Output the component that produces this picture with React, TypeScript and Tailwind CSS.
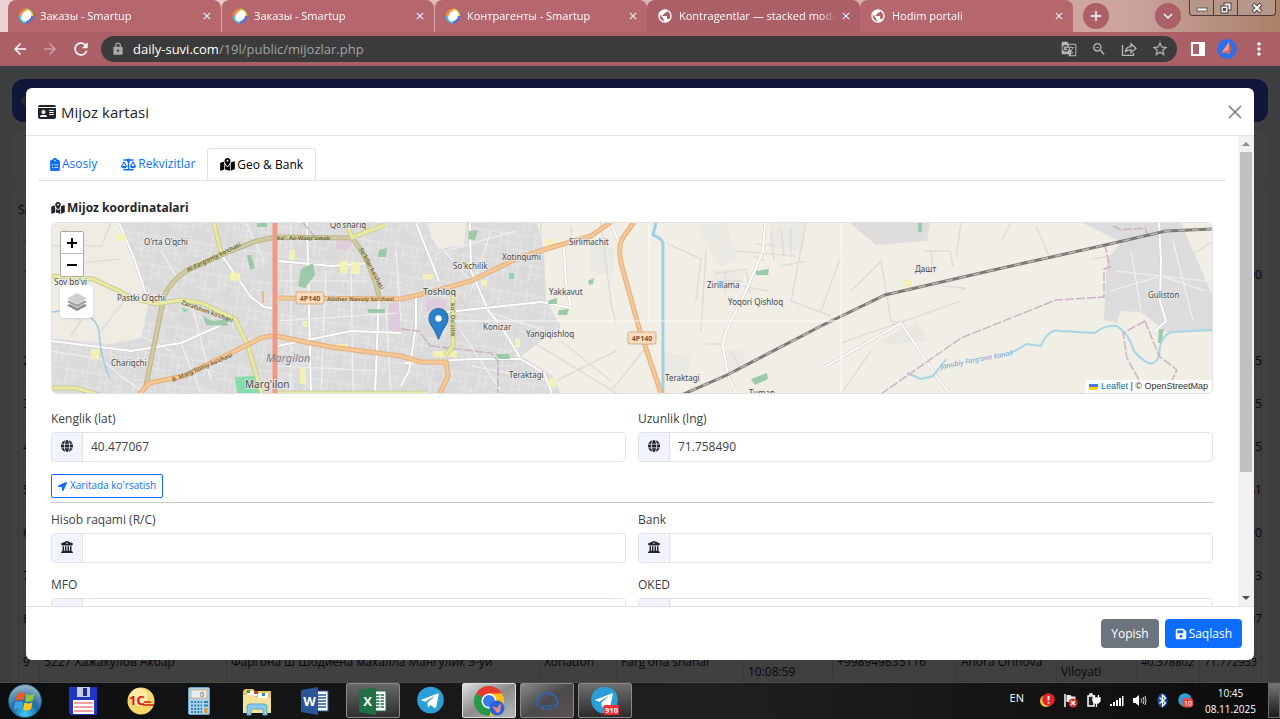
import React, { useState } from 'react';
import { FaLocationArrow } from 'react-icons/fa';
import {
  FaArrowLeft,
  FaBuildingColumns,
  FaClipboardList,
  FaFloppyDisk,
  FaGlobe,
  FaIdCard,
  FaMapLocationDot,
  FaScaleBalanced,
} from 'react-icons/fa6';
import {
  MdArrowBack,
  MdArrowForward,
  MdClose,
  MdGTranslate,
  MdLock,
  MdMoreVert,
  MdPublic,
  MdRefresh,
  MdStarOutline,
  MdZoomOut,
  MdAdd,
  MdKeyboardArrowDown,
} from 'react-icons/md';

const browserTabs = [
  { title: 'Заказы - Smartup', kind: 'smartup', active: false },
  { title: 'Заказы - Smartup', kind: 'smartup', active: false },
  { title: 'Контрагенты - Smartup', kind: 'smartup', active: false },
  { title: 'Kontragentlar — stacked modal', kind: 'globe', active: true },
  { title: 'Hodim portali', kind: 'globe', active: false },
];

const SmartupIcon = () => (
  <svg viewBox="0 0 16 16" className="h-4 w-4 shrink-0">
    <path d="M8 .6A7.4 7.4 0 0 0 .6 8L4 8a4 4 0 0 1 4-4Z" fill="#f08a3c" />
    <path d="M8 .6A7.4 7.4 0 0 1 15.4 8H12A4 4 0 0 0 8 4Z" fill="#c3d94e" />
    <path d="M15.4 8A7.4 7.4 0 0 1 8 15.4V12a4 4 0 0 0 4-4Z" fill="#5b6fd0" />
    <path d="M.6 8A7.4 7.4 0 0 0 8 15.4V12a4 4 0 0 1-4-4Z" fill="#45c0e8" />
    <ellipse cx="8.2" cy="7.8" rx="4.6" ry="6" fill="#fff" transform="rotate(38 8 8)" />
  </svg>
);

const TabStrip = () => (
  <div className="flex h-8 shrink-0 items-stretch bg-linear-to-r from-[#ecd3d6] via-[#cda39f] via-88% to-[#a98268] pl-2">
    {browserTabs.map((tab, i) => (
      <div
        key={i}
        className={`flex w-[213px] min-w-0 shrink items-center rounded-t-lg pr-2 pl-2.5 text-white ${
          tab.active ? 'bg-[#ab5f66]' : 'bg-[#b5676d]'
        } ${i === 1 || i === 2 ? 'border-l border-[#d9a5a9]' : ''}`}
      >
        {tab.kind === 'smartup' ? <SmartupIcon /> : <MdPublic className="h-4 w-4 shrink-0" />}
        <span className="ml-1.5 min-w-0 flex-1 overflow-hidden mask-r-from-90% text-[11px] leading-4 whitespace-nowrap">{tab.title}</span>
        <button type="button" aria-label="Close tab" className="ml-1 shrink-0">
          <MdClose className="h-3 w-3" />
        </button>
      </div>
    ))}
    <button type="button" aria-label="New tab" className="mt-[3px] ml-2.5 flex h-[26px] w-[26px] shrink-0 items-center justify-center rounded-full bg-[#ab5f66] text-white">
      <MdAdd className="h-[18px] w-[18px]" />
    </button>
    <div className="flex-1" />
    <button type="button" aria-label="Search tabs" className="mt-[3px] mr-2 flex h-[26px] w-[26px] shrink-0 items-center justify-center rounded-full bg-[#ab5f66] text-white">
      <MdKeyboardArrowDown className="h-[18px] w-[18px]" />
    </button>
    <div className="mr-1 flex h-4 w-[87px] shrink-0 divide-x divide-[#4d3a38] rounded-b border border-t-0 border-[#4d3a38] bg-[#b7978a]">
      <button type="button" aria-label="Minimize" className="flex w-6 items-center justify-center">
        <svg viewBox="0 0 12 10" className="h-2.5 w-3"><rect x="1" y="5" width="10" height="3" fill="#fff" stroke="#4d4644" strokeWidth=".8" /></svg>
      </button>
      <button type="button" aria-label="Restore" className="flex w-6 items-center justify-center">
        <svg viewBox="0 0 12 12" className="h-3 w-3" fill="none" stroke="#4d4644">
          <rect x="4" y="1" width="7" height="7" fill="#eee" />
          <rect x="1" y="4" width="7" height="7" fill="#eee" />
          <rect x="3.500" y="6.500" width="2" height="2" fill="#7c625a" />
        </svg>
      </button>
      <button type="button" aria-label="Close window" className="flex flex-1 items-center justify-center">
        <svg viewBox="0 0 12 12" className="h-3 w-3">
          <path d="m2 2 8 8M10 2l-8 8" stroke="#4d4644" strokeWidth="4" />
          <path d="m2.500 2.500 7 7M9.500 2.500l-7 7" stroke="#fff" strokeWidth="2" />
        </svg>
      </button>
    </div>
  </div>
);

const Toolbar = () => (
  <div className="flex h-[34px] shrink-0 items-center bg-[#ab5f66] px-[11px] text-white">
    <button type="button" aria-label="Back"><MdArrowBack className="h-[18px] w-[18px]" /></button>
    <button type="button" aria-label="Forward" className="ml-3 text-[#d19fa3]"><MdArrowForward className="h-[18px] w-[18px]" /></button>
    <button type="button" aria-label="Reload" className="ml-3"><MdRefresh className="h-5 w-5" /></button>
    <div className="ml-2.5 flex h-[26px] min-w-0 flex-1 items-center rounded-full bg-[#3b3b3b] pr-2 pl-2.5">
      <MdLock className="h-3.5 w-3.5 text-[#a8abae]" />
      <p className="ml-2 flex-1 text-[13px] leading-5 text-[#a0a3a6]">
        <span className="text-white">daily-suvi.com</span>/19l/public/mijozlar.php
      </p>
      <div className="flex items-center gap-3.5 text-[#b4b6b8]">
        <MdGTranslate className="h-4 w-4" />
        <MdZoomOut className="h-4 w-4" />
        <svg viewBox="0 0 16 16" className="h-4 w-4" fill="none" stroke="currentColor" strokeWidth="1.300">
          <path d="M1.500 4v10.300h11V12" />
          <path d="M4.500 10.500q.5-4.500 5.500-4.800V2.800l5 4.500-5 4.300V8.800q-3.500-.2-5.500 1.700Z" />
        </svg>
        <MdStarOutline className="h-[18px] w-[18px]" />
      </div>
    </div>
    <svg viewBox="0 0 14 14" className="ml-3.5 h-3.5 w-3.5">
      <path d="M0 0h14v14H0zM2 2v10h6V2z" fill="#fff" fillRule="evenodd" />
    </svg>
    <svg viewBox="0 0 20 20" className="ml-3 h-5 w-5">
      <circle cx="10" cy="10" r="10" fill="#2f6fe8" />
      <path d="m12 3 .5 8-8 2.500z" fill="#f59a86" />
      <path d="m12 3 4 10-3.500-2z" fill="#d94c4c" />
      <path d="m4.500 13.500 8-2.500 1 4z" fill="#e5645c" />
    </svg>
    <button type="button" aria-label="Menu" className="ml-3"><MdMoreVert className="h-5 w-5" /></button>
  </div>
);

const clients = [
  { id: 1, lng: '71.758490' },
  { id: null, lng: '' },
  { id: 2, lng: '71.771235' },
  { id: 3, lng: '71.780415' },
  { id: 4, lng: '71.764825' },
  { id: 5, lng: '71.753041' },
  { id: 6, lng: '71.790120' },
  { id: 7, lng: '71.786213' },
  { id: 8, lng: '71.769507' },
];

const ClientsPage = () => (
  <div aria-hidden="true" className="h-full overflow-hidden bg-[#f4f6fa] px-3 pt-[13px] text-xs text-[#212529]">
    <div className="flex h-[43px] items-center rounded-xl bg-[#4059e8] px-2 text-[#a8a8b0]">
      <FaArrowLeft className="h-4 w-4" />
    </div>
    <div className="mt-2 h-[50px] rounded-lg bg-white" />
    <div className="mt-2.5 rounded-lg bg-white px-1.5 pt-3">
      <p className="h-[26px] leading-4">Sahifada</p>
      <table className="w-full table-fixed border-collapse [&_td]:border [&_td]:border-[#dee2f4] [&_td]:px-1 [&_th]:border [&_th]:border-[#dee2f4] [&_th]:px-1">
        <colgroup>
          <col className="w-[21px]" />
          <col className="w-[187px]" />
          <col />
          <col className="w-[77px]" />
          <col className="w-[127px]" />
          <col className="w-[89px]" />
          <col className="w-[124px]" />
          <col className="w-[100px]" />
          <col className="w-[80px]" />
          <col className="w-[63px]" />
          <col className="w-[62px]" />
        </colgroup>
        <thead>
          <tr className="h-[25px]">
            <th>#</th>
            <th colSpan={10} />
          </tr>
        </thead>
        <tbody>
          {clients.map((client, i) => (
            <tr key={i} className="h-[43px]">
              <td>{client.id}</td>
              <td colSpan={9} />
              <td className="text-right">{client.lng}</td>
            </tr>
          ))}
          <tr className="h-[43px] leading-5 whitespace-nowrap">
            <td>9</td>
            <td>5227 Хажакулов Акбар</td>
            <td>Фаргона ш Шодиёна махалла Мангулик 3-уй</td>
            <td>Xonadon</td>
            <td>Farg'ona shahar</td>
            <td>2025-11-08<br />10:08:59</td>
            <td>+998949835116</td>
            <td>Ahora Orinova</td>
            <td>Farg'ona<br />Viloyati</td>
            <td className="text-[11px]">40.378802</td>
            <td className="text-[11px]">71.772933</td>
          </tr>
        </tbody>
      </table>
    </div>
  </div>
);

// label: x, y, text, size
const places: [number, number, string, number][] = [
  [143, 244, "O'rta O'qchi", 8],
  [329, 227, "Qo'shariq", 8],
  [53, 284, "Soy bo'yi", 8],
  [116, 300, "Pastki O'qchi", 8],
  [110, 365, 'Chariqchi', 8],
  [244, 387, "Marg'ilon", 10],
  [422, 294, 'Toshloq', 9],
  [452, 268, "So'kchilik", 8],
  [501, 259, 'Xotinqumi', 8],
  [568, 244, 'Sirlimachit', 8],
  [548, 294, 'Yakkavut', 8],
  [482, 329, 'Konizar', 8],
  [525, 336, 'Yangiqishloq', 8],
  [508, 377, 'Teraktagi', 8],
  [664, 380, 'Teraktagi', 8],
  [706, 287, 'Zirillama', 8],
  [727, 304, 'Yoqori Qishloq', 8],
  [748, 395, 'Tuman', 8],
  [914, 271, 'Дашт', 8],
  [1147, 297, 'Guliston', 8],
];

const yellowRoads = [
  'M51 275 92 278 120 291 130 297 155 303 180 299 200 302 234 318 247 345 261 393',
  'M213 222 220 252',
  'M345 222 352 238M352 236 384 224',
  'M51 387 75 387 98 394',
  'M452 290v55l-8 10M277 392h150',
];

const oliveRoads = ['M145 384 155 335 163 295Q170 280 185 270L225 252 255 240 275 236 352 237', 'M352 238Q371 262 378 296'];

const orangeRoads = [
  'M136 396 148 382 183 375 230 352 260 337 Q272 333 285 337 L330 346 400 355 420 361 445 361 447 375 438 394',
  'M277 297 400 298 430 291 470 280 515 258 545 248 590 235 610 221',
  'M633 221 621 238 Q617 246 620 262 L638 327 661 395',
];

const whiteRoads = [
  'M118 222 133 257 148 302M218 250 235 275 250 296 263 306 275 308M51 340 130 350 180 342 234 318',
  'M415 222 438 280M469 222 470 270 487 309 500 325 520 358 543 372 551 393M563 246 565 282 570 307',
  'M438 312 540 301 570 307M415 295 415 325 408 370 400 385M404 362 470 358 520 358',
  'M278 260 330 265 370 262M378 296 374 392M277 345 350 330 400 332M306 222 310 392M610 222 618 242',
  'M764 222 762 250 745 290 725 330 722 345 727 375 736 394M820 368 860 345 900 322 935 375 950 394',
  'M1158 222 1160 260 1159 300 1165 320 1152 332',
];

const thinRoads = [
  'M51 350 100 358 120 375 145 393M180 342 200 393M245 222 263 260M395 250 400 320M160 250 175 275M190 300 210 380',
  'M290 222v170M325 270 320 392M350 260 352 392M277 280h90M277 320l120-8M277 365l100 5M385 310 390 392M430 235l40 45M490 230l-20 60M445 250l70-20',
  'M460 330 500 390M470 365l80 15M485 310l60 20M130 330l40 20M1130 250l10 60M1110 290l50-15 45 15M1172 240l20 80M1115 270l90 10',
];

const minorRoads = [
  'M51 245 100 245 110 222M80 262 120 258M60 300 80 320 70 335M100 330 130 290M62 228 85 240',
  'M540 222v48M570 225v18M600 222l10 80 5 20M615 350l-60 30-40-25M560 340l50 40M530 340l90 55M650 340l-40 50',
  'M665 242 700 258 695 300M805 222 790 300 830 315M700 330l5-80M735 250l60 5M742 285l25 5M780 265l25-5',
  'M715 272l30-4 4 24M718 280h24M724 268v25M752 255l12 5M755 243l20 2M770 230l3 30M780 228l3 28M790 226v30M730 350l10 18M705 343h18',
  'M840 255 820 310M850 290 880 260 890 320 903 322M955 255 960 222M1000 240 1010 222M940 285 965 287 960 289',
  'M922 250h27l3 15M930 250l2 20M1035 225 1048 255M1090 258 1160 248M1180 260 1213 240M840 393 870 350M840 342 960 300',
];

const greens = [
  'M300 268 312 262 314 274 304 287 297 285Z',
  'M246 254h4l4 13-5 2Z',
  'M202 315 212 320 228 318 226 325 205 324Z',
  'M378 249 386 247 385 256 377 256Z',
  'M468 230 477 229 474 239 467 238Z',
  'M548 299 556 297 556 303 547 303Z',
  'M558 309 568 308 566 314 557 314Z',
  'M587 280 593 277 592 283 588 284Z',
  'M495 353 508 353 509 358 497 358Z',
  'M755 270 768 268 767 274 755 274Z',
  'M750 378 766 372 767 378 754 384Z',
  'M1158 328h5l-3 14h-3Z',
  'M917 222h4v9h-4Z',
  'M366 308h18v4h-16Z',
  'M256 222h10v4h-10Z',
];

const yellows = [
  [117, 233, 8, 7], [229, 272, 10, 8], [288, 249, 6, 10], [339, 260, 8, 12], [351, 261, 8, 12],
  [299, 367, 6, 16], [90, 348, 8, 10], [422, 273, 10, 5], [480, 279, 6, 6], [545, 238, 8, 9],
  [432, 350, 24, 6], [548, 377, 7, 9], [514, 338, 5, 8], [302, 320, 4, 6], [903, 279, 7, 7], [335, 343, 12, 6],
];

const MapView = () => (
  <div className="relative h-[172px] overflow-hidden rounded-md border border-[#dee2e6] bg-[#f1eee6]">
    <svg viewBox="51 222 1162 170" preserveAspectRatio="xMinYMin slice" className="h-full w-full" fontFamily='"Noto Sans", sans-serif'>
      <defs>
        <pattern id="streets" width="34" height="29" patternUnits="userSpaceOnUse" patternTransform="rotate(9)">
          <rect width="34" height="29" fill="#dbdbdb" />
          <path d="M0 5h34M0 20h21M8 5v24M21 0v20M28 5v15M14 20v9M3 5v9h5M21 13h13" stroke="#e7e7e7" fill="none" />
          <path d="M0 12h8M17 5v15M24 20l10 8" stroke="#d2d2d2" fill="none" strokeWidth=".7" />
        </pattern>
      </defs>

      <path d="M51 222H536L543 250 545 300 560 325 520 355 552 375 560 393H51Z" fill="url(#streets)" />
      <path d="M51 222h67l15 35 15 45-8 35-30 6-59-6Z" fill="#efece4" />
      <path d="M425 222h40l-2 22-26 4Z" fill="#efece4" />
      <path d="M540 222h60v90l-50-5Z" fill="#f1eee6" />
      <path d="M590 240l24 8-2 26-24-4Z" fill="#eae8e3" />
      <path d="M695 224l30-2 12 35-18 10Z M770 222h35l-3 28-34-3Z M712 268l32 4-6 20-26-4Z M726 350l16-2 4 18-20 4Z M660 350l30 6-4 22-24-2Z" fill="#ebe9e3" />
      <path d="M849 222h80l-3 18-51 4Z" fill="#dedddb" />
      <path d="M878 340l38-18 12 18-40 4Z" fill="#e9e7e2" />
      <path d="M1082 222h98l33 76v32l-48 1-25-20-20-1-4 12-13-3 3-60 14-18Z" fill="#dcdcdc" />
      <path d="M336 240h16l-6 9-12-1ZM388 302h11v29l-11-2ZM425 298h20v16l-20-4Z" fill="#dfcbdd" />

      {minorRoads.map((d) => (
        <path key={d} d={d} fill="none" stroke="#dfdcd9" strokeWidth="1.500" />
      ))}
      {thinRoads.map((d) => (
        <path key={d} d={d} fill="none" stroke="#f0f0f0" strokeWidth="1.200" />
      ))}
      {whiteRoads.map((d) => (
        <g key={d} fill="none">
          <path d={d} stroke="#cfcdcb" strokeWidth="3" />
          <path d={d} stroke="#fff" strokeWidth="2" />
        </g>
      ))}
      {greens.map((d) => (
        <path key={d} d={d} fill="#9cc9a8" />
      ))}
      <path d="M234 376l22-1 4 17h-24ZM180 307l8 1-4 4ZM508 272h5v6h-5Z" fill="#86dcaa" />
      {yellows.map(([x, y, w, h]) => (
        <rect key={`${x}-${y}`} x={x} y={y} width={w} height={h} fill="#f3f2b4" />
      ))}

      <path d="M51 311 Q92 305 98 330 Q99 355 109 378" fill="none" stroke="#9dcce0" strokeWidth="1.500" />
      <path d="M655 222 652 234 Q662 238 662 243 L662 393" fill="none" stroke="#9fd0e2" strokeWidth="3" />
      <path
        d="M906 372 920 378 932 375 945 358M1010 352 1026 343 1040 345 Q1047 327 1060 330 L1094 332 Q1104 323 1116 325 Q1128 333 1133 350 Q1152 372 1158 355 Q1159 333 1172 331 L1213 329"
        fill="none"
        stroke="#a6d6e6"
        strokeWidth="2"
      />
      <g fill="none" stroke="#cdb3c8" strokeWidth="1.500" strokeDasharray="9 2">
        <path d="M880 393 960 337 1055 299 1103 296 1103 268 1109 266 1104 245M1112 225l8 4 24-2 2 6" />
        <path d="M1144 320l-22 12 4 25 12 22 10 4M1144 320l14 35 18 14-6 12M430 345l60 7 7 8v33M302 222l12 14" />
        <path d="M400 328l18 2 12 16" />
      </g>

      {oliveRoads.map((d) => (
        <g key={d} fill="none">
          <path d={d} stroke="#b9b58e" strokeWidth="5" />
          <path d={d} stroke="#cfcb9f" strokeWidth="3" />
        </g>
      ))}
      {yellowRoads.map((d) => (
        <g key={d} fill="none">
          <path d={d} stroke="#cbcba4" strokeWidth="5" />
          <path d={d} stroke="#e9ea9c" strokeWidth="3" />
        </g>
      ))}
      <path d="M262 290v12" stroke="#e8b98c" strokeWidth="2" />
      {orangeRoads.map((d) => (
        <g key={d} fill="none">
          <path d={d} stroke="#e3b07c" strokeWidth="5" />
          <path d={d} stroke="#f5c795" strokeWidth="3" />
        </g>
      ))}
      <path d="M274 222v171" stroke="#f09a86" strokeWidth="5" />

      <g fill="none">
        <path d="M676 396 726 374 820 325 884 294 1010 265 1100 245 1165 230 1213 228" stroke="#7b7a78" strokeWidth="3" />
        <path d="M676 396 726 374 820 325 884 294 1010 265 1100 245 1165 230 1213 228" stroke="#bcbab5" strokeWidth="1.500" strokeDasharray="7 7" />
      </g>
      <path d="M452 320h388M648 222v98M840 222v171" stroke="#fff" strokeWidth="1" opacity=".8" />

      {[[295, 291], [627, 331]].map(([x, y]) => (
        <g key={x}>
          <rect x={x} y={y} width="28" height="12" rx="2" fill="#f7dcc0" stroke="#d9ab80" />
          <text x={x + 14} y={y + 9} fontSize="7" fontWeight="700" fill="#7a5a38" textAnchor="middle">4P140</text>
        </g>
      ))}
      <g fontSize="6" fontWeight="600" fill="#6b6735">
        <text transform="translate(187 271) rotate(-26)">Al-Farg'oniy ko'chasi</text>
        <text x="276" y="239">ko'. Az-Waqr'owak</text>
        <text x="326" y="300">Alisher Navoiy ko'chasi</text>
        <text transform="translate(180 303) rotate(20)">Zarafshon ko'chasi</text>
        <text transform="translate(172 381) rotate(-23)">B. Marg'iloniy ko'chasi</text>
        <text transform="translate(358 248) rotate(62)">So'kilar ko'chasi</text>
        <text transform="translate(450 302) rotate(90)">ko'. Do'stlik</text>
      </g>
      <text transform="translate(940 368) rotate(-11)" fontSize="7" fontStyle="italic" fill="#6fa3d4">Janubiy Farg'ona Kanali</text>
      <text x="265" y="361" fontSize="11" fontStyle="italic" fill="#85808a">Margilon</text>
      {places.map(([x, y, text, size]) => (
        <text key={`${text}-${x}`} x={x} y={y} fontSize={size} fill="#4a4a4a" stroke="#ececec" strokeWidth="2" strokeOpacity=".7" paintOrder="stroke">
          {text}
        </text>
      ))}

      <path d="M437.500 338.500 Q434 329 430 324 Q427.500 320 428 316.500 A9.500 9 0 0 1 447 316.500 Q447.500 320 445 324 Q441 329 437.500 338.500Z" fill="#2a81c9" stroke="#2568a3" />
      <circle cx="437.500" cy="317.500" r="3.200" fill="#fff" />
    </svg>

    <div className="absolute top-2 left-2 flex w-6 flex-col divide-y divide-[#bbb] rounded-xs border border-[#aaa] bg-white text-black">
      <button type="button" aria-label="Zoom in" className="flex h-[22px] items-center justify-center">
        <svg viewBox="0 0 10 10" className="h-2.5 w-2.5"><path d="M0 5h10M5 0v10" stroke="currentColor" strokeWidth="2" /></svg>
      </button>
      <button type="button" aria-label="Zoom out" className="flex h-[22px] items-center justify-center">
        <svg viewBox="0 0 10 10" className="h-2.5 w-2.5"><path d="M0 5h10" stroke="currentColor" strokeWidth="2" /></svg>
      </button>
    </div>
    <button type="button" aria-label="Layers" className="absolute top-[62px] left-2 flex h-[33px] w-[33px] items-center justify-center rounded bg-white shadow">
      <svg viewBox="0 0 20 20" className="h-5 w-5">
        <path d="m10 19-10-5.500 2.500-1.500L10 16l7.500-4 2.500 1.500Z" fill="#8c8c8c" />
        <path d="m10 15.500-10-5.500 2.500-1.500L10 12.500l7.500-4L20 10Z" fill="#a3a3a3" />
        <path d="M10 12 0 6.500 10 1l10 5.500Z" fill="#cfcfcf" />
      </svg>
    </button>
    <div className="absolute right-0 bottom-0 flex items-center gap-[3px] bg-white/80 px-1 font-['Liberation_Sans',sans-serif] text-[9px] leading-[13px] text-[#333]">
      <svg viewBox="0 0 12 8" className="h-[6px] w-[9px]">
        <path fill="#4c7be1" d="M0 0h12v4H0z" />
        <path fill="#ffd500" d="M0 4h12v4H0z" />
      </svg>
      <span><a href="#leaflet" className="text-[#0078a8]">Leaflet</a> | © OpenStreetMap</span>
    </div>
  </div>
);

type FieldProps = {
  id: string;
  label: string;
  icon: React.ReactNode;
  value?: string;
};

const Field = ({ id, label, icon, value = '' }: FieldProps) => {
  const [text, setText] = useState(value);
  return (
    <div>
      <label htmlFor={id} className="mb-[3px] block leading-5 text-[#3c4147]">{label}</label>
      <div className="flex h-[30px] rounded border border-[#dee2e6]">
        <span className="flex w-[31px] shrink-0 items-center justify-center rounded-l border-r border-[#dee2e6] bg-[#f1f4ff] pb-0.5 text-[#212529]">{icon}</span>
        <input
          id={id}
          value={text}
          onChange={(e) => setText(e.target.value)}
          className="min-w-0 flex-1 rounded-r bg-white px-2 text-[#3c4147] outline-none"
        />
      </div>
    </div>
  );
};

const modalTabs = [
  { label: 'Asosiy', icon: FaClipboardList },
  { label: 'Rekvizitlar', icon: FaScaleBalanced },
  { label: 'Geo & Bank', icon: FaMapLocationDot },
];

const ClientModal = () => (
  <div role="dialog" aria-labelledby="client-title" className="flex h-full flex-col overflow-hidden rounded-md bg-white text-xs text-[#212529]">
    <header className="flex h-12 shrink-0 items-center border-b border-[#dee2e6] px-3">
      <FaIdCard className="h-4 w-[18px]" />
      <h5 id="client-title" className="ml-[5px] flex-1 text-[15px]">Mijoz kartasi</h5>
      <button type="button" aria-label="Close">
        <svg viewBox="0 0 14 14" className="h-3.5 w-3.5"><path d="m1 1 12 12M13 1 1 13" stroke="#777" strokeWidth="1.500" /></svg>
      </button>
    </header>

    <div className="flex min-h-0 flex-1">
      <div className="min-w-0 flex-1 overflow-hidden p-3">
        <div role="tablist" className="flex border-b border-[#dee2e6]">
          {modalTabs.map(({ label, icon: Icon }, i) => (
            <button
              key={label}
              type="button"
              role="tab"
              aria-selected={i === 2}
              className={
                i === 2
                  ? '-mb-px flex h-8 items-center gap-0.5 rounded-t border border-b-0 border-[#dee2e6] bg-white px-3 text-black'
                  : 'flex h-8 items-center gap-0.5 px-3 text-[#0d6efd]'
              }
            >
              <Icon className={i === 0 ? 'h-[13px] w-2.5' : 'h-[13px] w-[15px]'} />
              {label}
            </button>
          ))}
        </div>

        <div role="tabpanel" className="px-[13px] pt-4">
          <h6 className="mb-1 flex items-center gap-0.5 leading-[21px] font-bold">
            <FaMapLocationDot className="h-3 w-3.5" />
            Mijoz koordinatalari
          </h6>
          <MapView />
          <div className="mt-[15px] grid grid-cols-2 gap-3">
            <Field id="lat" label="Kenglik (lat)" icon={<FaGlobe />} value="40.477067" />
            <Field id="lng" label="Uzunlik (lng)" icon={<FaGlobe />} value="71.758490" />
          </div>
          <button type="button" className="mt-3 flex h-6 items-center gap-[3px] rounded-xs border border-[#0d6efd] px-1.5 text-[10px] text-[#0d6efd]">
            <FaLocationArrow className="h-[9px] w-[9px]" />
            Xaritada ko'rsatish
          </button>
          <hr className="mt-1 mb-[7px] border-[#c8cacc]" />
          <div className="grid grid-cols-2 gap-3">
            <Field id="account" label="Hisob raqami (R/C)" icon={<FaBuildingColumns />} />
            <Field id="bank" label="Bank" icon={<FaBuildingColumns />} />
            <Field id="mfo" label="MFO" icon={<FaBuildingColumns />} />
            <Field id="oked" label="OKED" icon={<FaBuildingColumns />} />
          </div>
        </div>
      </div>

      <div aria-hidden="true" className="flex w-4 shrink-0 flex-col items-center bg-[#f1f1f1] px-0.5">
        <svg viewBox="0 0 16 16" className="h-4 w-4 shrink-0"><path d="m8 6 4 4H4Z" fill="#8a8a8a" /></svg>
        <div className="h-[68%] w-full bg-[#c1c1c1]" />
        <div className="flex-1" />
        <svg viewBox="0 0 16 16" className="h-4 w-4 shrink-0"><path d="m8 10 4-4H4Z" fill="#505050" /></svg>
      </div>
    </div>

    <footer className="flex h-[54px] shrink-0 items-center justify-end gap-1.5 border-t border-[#dee2e6] px-3 text-white">
      <button type="button" className="h-[29px] rounded bg-[#6c757d] px-2.5">Yopish</button>
      <button type="button" className="flex h-[29px] items-center gap-0.5 rounded bg-[#0d6efd] px-2.5">
        <FaFloppyDisk />
        Saqlash
      </button>
    </footer>
  </div>
);

const TelegramIcon = ({ badge }: { badge?: string }) => (
  <svg viewBox="0 0 30 30" className="h-[30px] w-[30px]">
    <circle cx="14.500" cy="14" r="13.300" fill="#2ba0d8" />
    <path d="M5.500 13.800 21.500 7.500c.9-.3 1.500.2 1.200 1.500l-2.600 12.300c-.2.900-.8 1.100-1.500.7l-4-3-2 1.900c-.3.300-.6.300-.7-.4l-.6-3.700 8-7.300-10 6.300-3.800-1.200c-.7-.2-.7-.6 0-.8Z" fill="#fff" />
    {badge && (
      <>
        <rect x="14" y="19" width="15" height="10" rx="1" fill="#ee2f35" />
        <text x="21.500" y="27" fontSize="7.500" fontWeight="700" fill="#fff" textAnchor="middle">{badge}</text>
      </>
    )}
  </svg>
);

const TotalCommanderIcon = () => (
  <svg viewBox="0 0 30 30" className="h-[30px] w-[30px]">
    <path d="M1 1h28v28H3L1 27Z" fill="#2136c4" />
    <path d="M9 1h13v10H9Z" fill="#c9cfdf" />
    <path d="M15 2h4v8h-4Z" fill="#1c2c9c" />
    <path d="M5 14h21v14H5Z" fill="#fff" />
    <path d="M6 17h19M6 21h19M6 25h19" stroke="#d9434b" />
  </svg>
);

const OneCIcon = () => (
  <svg viewBox="0 0 30 30" className="h-[30px] w-[30px]">
    <circle cx="15" cy="15" r="13.500" fill="#f9d66a" />
    <circle cx="13" cy="11" r="9" fill="#fdeba6" />
    <text x="3" y="19" fontSize="13" fontWeight="700" fill="#d8141c">1C</text>
    <path d="M17 19h11M18 16h7" stroke="#d8141c" strokeWidth="1.500" />
  </svg>
);

const CalculatorIcon = () => (
  <svg viewBox="0 0 30 30" className="h-[30px] w-[30px]">
    <rect x="4.500" y="1.500" width="21" height="27" rx="1.500" fill="#a9d4ee" stroke="#6da4c8" />
    <rect x="7" y="4" width="16" height="8" fill="#e3eef2" stroke="#e6a45a" strokeWidth=".8" />
    <text x="16" y="11" fontSize="7" fill="#456">0</text>
    <path d="M7 16h11M7 19.500h11M7 23h11M7 26h11" stroke="#3d7fb0" strokeWidth="2" strokeDasharray="2 1.200" />
    <path d="M20 16h4M20 19.500h4" stroke="#3d7fb0" strokeWidth="2" />
    <path d="M22 22v5" stroke="#f29222" strokeWidth="3" />
  </svg>
);

const ExplorerIcon = () => (
  <svg viewBox="0 0 30 30" className="h-[30px] w-[30px]">
    <path d="M1 5 3 3h8l2 2h16v22H1Z" fill="#e6c468" />
    <path d="M5 5h10v5H5ZM16 7h10v5H16Z" fill="#fff" />
    <path d="M5 4h3v3H5Z" fill="#3e9b48" />
    <path d="M12 5h4v3h-4Z" fill="#c7432e" />
    <path d="M20 7h3v3h-3Z" fill="#3b83c9" />
    <path d="M1 9h10l3 3h15v15H1Z" fill="#f7e29a" />
    <path d="M5 29V21q0-3 3-3h14q3 0 3 3v8h-4v-6H9v6Z" fill="#8ccbe8" stroke="#5aa7cf" />
  </svg>
);

const OfficeIcon = ({ letter, color }: { letter: string; color: string }) => (
  <svg viewBox="0 0 30 30" className="h-[30px] w-[30px]">
    <rect x="14" y="5" width="14" height="20" fill="#fff" stroke={color} />
    <path d="M17 9h9M17 12h9M17 15h9M17 18h9M17 21h9" stroke={color} strokeWidth="1.500" />
    {letter === 'X' && <path d="M22 7v16" stroke="#fff" />}
    <path d="M1 4 18 1v28L1 26Z" fill={color} />
    <text x="9.500" y="20" fontSize="13" fontWeight="700" fill="#fff" textAnchor="middle">{letter}</text>
  </svg>
);

const ChromeIcon = () => (
  <svg viewBox="0 0 32 32" className="h-8 w-8">
    <path d="M16 16 3 8.500A15 15 0 0 1 29 8.500Z" fill="#e33b2e" />
    <path d="M16 16V8.500h13A15 15 0 0 1 16 31Z" fill="#fbc116" />
    <path d="m16 16 3 8-3 7A15 15 0 0 1 3 8.500Z" fill="#269a4b" />
    <circle cx="16" cy="16" r="7.500" fill="#fff" />
    <circle cx="16" cy="16" r="6" fill="#3a7cec" />
    <circle cx="24" cy="23" r="7.500" fill="#2b62d9" />
    <path d="m19 21 5 2 4-5-1 9-3 1Z" fill="#f08a80" />
  </svg>
);

const AtsIcon = () => (
  <svg viewBox="0 0 30 30" className="h-[30px] w-[30px]">
    <path d="M8 20.500a4.500 4.500 0 0 1-.500-8.800 5 5 0 0 1 4-3.500 5.500 5.500 0 0 1 9 1 4 4 0 0 1 3.500 4 4 4 0 0 1-1.500 7.300h-1" fill="none" stroke="#2c66b8" strokeWidth="1.800" />
    <text x="15" y="24" fontSize="6.500" fontWeight="700" fill="#2c66b8" textAnchor="middle">ATC</text>
  </svg>
);

const taskbarItems = [
  { name: 'Total Commander', icon: <TotalCommanderIcon />, look: '' },
  { name: '1C', icon: <OneCIcon />, look: '' },
  { name: 'Calculator', icon: <CalculatorIcon />, look: '' },
  { name: 'Explorer', icon: <ExplorerIcon />, look: '' },
  { name: 'Word', icon: <OfficeIcon letter="W" color="#2a5699" />, look: '' },
  { name: 'Excel', icon: <OfficeIcon letter="X" color="#1f7145" />, look: 'border border-[#8a8a8a] bg-linear-to-b from-[#686868] to-[#303030]' },
  { name: 'Telegram', icon: <TelegramIcon />, look: '' },
  { name: 'Chrome', icon: <ChromeIcon />, look: 'border border-[#dedede] bg-linear-to-br from-[#e0e0e0] via-[#8c8c8c] to-[#b8b8b8]' },
  { name: 'ATC', icon: <AtsIcon />, look: 'border border-[#8a8a8a] bg-linear-to-br from-[#8b8b8b] via-[#4c4a4a] to-[#5a5252]' },
  { name: 'Telegram 910', icon: <TelegramIcon badge="910" />, look: 'border border-[#8a8a8a] bg-linear-to-b from-[#6f6f6f] to-[#2c2c2c]' },
];

const Tray = () => (
  <div className="flex items-center gap-2">
    <svg viewBox="0 0 15 15" className="h-[15px] w-[15px]">
      <circle cx="6" cy="8" r="6" fill="#f3c53a" />
      <circle cx="8.500" cy="6.500" r="6.300" fill="#e0262a" />
      <path d="M8.500 3v4.500M8.500 9v1.500" stroke="#fff" strokeWidth="1.800" />
    </svg>
    <svg viewBox="0 0 15 15" className="h-[15px] w-[15px]">
      <path d="M2 1v13" stroke="#fff" strokeWidth="1.500" />
      <path d="M3.500 2h4l1 1.500h4V9h-9Z" fill="#eee" />
      <circle cx="10" cy="10" r="4.500" fill="#d8302c" />
      <path d="m8 8 4 4M12 8l-4 4" stroke="#fff" strokeWidth="1.500" />
    </svg>
    <svg viewBox="0 0 15 15" className="h-[15px] w-[15px]">
      <path d="M2 3h6v10H2ZM4 1h2v2H4Z" fill="#222" stroke="#fff" strokeWidth="1.500" />
      <path d="M7 5h7v3l-2 2H9L7 8ZM8.500 2v3M12.500 2v3M10.500 10v4" fill="#fff" stroke="#fff" strokeWidth="1.300" />
    </svg>
    <svg viewBox="0 0 15 15" className="h-[15px] w-[15px]">
      <path d="M1 11h2v2H1ZM4 9h2v4H4ZM7 7h2v6H7ZM10 5h2v8h-2ZM13 3h1.500v10H13Z" fill="#fff" />
    </svg>
    <svg viewBox="0 0 15 15" className="h-[15px] w-[15px]">
      <path d="M1 5h2.500L7 2v11l-3.500-3H1Z" fill="#fff" />
      <path d="M9 5.500q1.500 2 0 4M11 4q2 3.500 0 7M13 3q2 4.500 0 9" stroke="#ddd" fill="none" />
    </svg>
    <svg viewBox="0 0 15 15" className="h-[15px] w-[15px]">
      <ellipse cx="7.500" cy="7.500" rx="5" ry="7" fill="#1c4f9c" />
      <path d="m4.500 4.500 6 5.500L7.500 13V2l3 3-6 5.500" stroke="#fff" strokeWidth="1.200" fill="none" />
    </svg>
    <svg viewBox="0 0 15 15" className="h-[15px] w-[15px]">
      <circle cx="7" cy="7" r="6.800" fill="#2f9fd6" />
      <rect x="4.500" y="5" width="10.500" height="9.500" rx="3" fill="#e94643" />
      <text x="10" y="12.500" fontSize="7" fill="#fff" textAnchor="middle">10</text>
    </svg>
  </div>
);

const Taskbar = () => (
  <div className="flex h-[37px] shrink-0 items-center border-t border-[#4a4a4a] bg-linear-to-r from-[#0c0e0f] via-[#211f20] via-55% to-[#0c0c0c] pb-px text-white">
    <button type="button" aria-label="Start" className="ml-2 w-[48px]">
      <svg viewBox="0 0 34 34" className="h-[34px] w-[34px]">
        <defs>
          <radialGradient id="orb" cx=".5" cy=".9" r=".9">
            <stop offset="0" stopColor="#3fd0f5" />
            <stop offset=".45" stopColor="#1c6aa5" />
            <stop offset="1" stopColor="#9fb9c9" />
          </radialGradient>
        </defs>
        <circle cx="17" cy="17" r="16.500" fill="url(#orb)" stroke="#24506f" />
        <path d="M9 10q4-2.500 8-.5l-1.500 7q-4-1.800-8 .4Z" fill="#ee5a24" />
        <path d="M18.500 10q4 2 8-.5l-1.500 7q-4 2.300-8 .4Z" fill="#8cc63e" />
        <path d="M7 18.500q4-2.200 8-.3l-1.500 7q-4-2-8 .4Z" fill="#3fa4e6" />
        <path d="M16.500 18.500q4 2 8-.3l-1.500 7q-4 2.300-8 .3Z" fill="#fcc81c" />
      </svg>
    </button>
    <div className="flex gap-1">
      {taskbarItems.map((item) => (
        <button key={item.name} type="button" aria-label={item.name} className={`flex h-[35px] w-[54px] items-center justify-center rounded-xs ${item.look}`}>
          {item.icon}
        </button>
      ))}
    </div>
    <div className="flex-1" />
    <span className="mr-4 pb-1 text-[11px]">EN</span>
    <Tray />
    <div className="mx-3 text-center text-[10px] leading-4">
      <p>10:45</p>
      <p>08.11.2025</p>
    </div>
    <button type="button" aria-label="Show desktop" className="h-full w-3 border border-[#6a6a6a] bg-linear-to-b from-[#777] to-[#1c1c1c]" />
  </div>
);

const App = () => {
  return (
    <div className="flex h-screen flex-col overflow-hidden font-['Open_Sans','Noto_Sans',sans-serif]">
      <TabStrip />
      <Toolbar />
      <main className="relative min-h-0 flex-1">
        <ClientsPage />
        <div className="absolute inset-0 bg-black/75 px-[26px] py-[22px]">
          <ClientModal />
        </div>
      </main>
      <Taskbar />
    </div>
  );
};

export default App;
